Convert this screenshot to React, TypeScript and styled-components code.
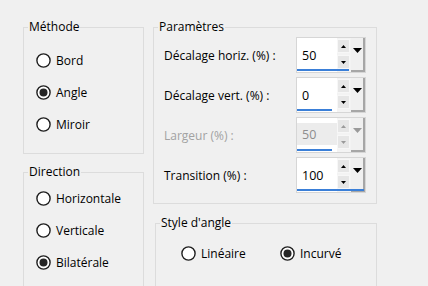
import styled, { createGlobalStyle } from 'styled-components';

const GlobalStyle = createGlobalStyle`
  html, body {
    margin: 0;
    padding: 0;
    background: #f0f0f0;
    overflow: hidden;
  }
  body {
    font-family: 'Open Sans', 'Noto Sans', sans-serif;
    font-size: 12px;
    color: #000;
  }
`;

const Page = styled.div`
  display: grid;
  grid-template-columns: 121px 224px;
  column-gap: 9px;
  padding: 18px 0 0 23px;
  height: 268px;
  overflow: hidden;
`;

const Column = styled.div<{ gap: number }>`
  display: flex;
  flex-direction: column;
  gap: ${({ gap }) => gap}px;
`;

const Group = styled.fieldset<{ shift?: number }>`
  margin: 0 0 0 ${({ shift }) => shift ?? 0}px;
  padding: 0;
  min-width: 0;
  border: 1px solid #dcdcdc;
  border-radius: 0;
`;

const Legend = styled.legend`
  margin-left: 4px;
  padding: 0 1px;
  line-height: 18px;
  font-size: 12px;
`;

const RadioList = styled.div<{ top: number; bottom: number }>`
  display: flex;
  flex-direction: column;
  padding: ${({ top, bottom }) => `${top}px 0 ${bottom}px 12px`};
`;

const RadioRow = styled.div<{ width?: number }>`
  display: flex;
  align-items: center;
  gap: 5px;
  height: 32px;
  width: ${({ width }) => (width ? `${width}px` : 'auto')};
  font-size: 12px;
`;

const InlineRadios = styled.div`
  display: flex;
  padding: 9px 0 30px 25px;

  ${RadioRow} {
    height: 24px;
  }
`;

const ParamList = styled.div`
  display: flex;
  flex-direction: column;
  gap: 4px;
  padding: 1px 10px 10px 10px;
`;

const ParamRow = styled.div<{ disabled?: boolean }>`
  display: flex;
  align-items: center;
  justify-content: space-between;
  height: 36px;
  color: ${({ disabled }) => (disabled ? '#a2a2a2' : '#000')};
`;

const SpinBox = styled.div`
  position: relative;
  display: flex;
  width: 70px;
  height: 36px;
  box-sizing: border-box;
  border: 1px solid #d6d6d6;
  background: #fff;
`;

const ValueField = styled.div<{ disabled?: boolean }>`
  flex: 1;
  display: flex;
  align-items: center;
  padding-left: 5px;
  margin: ${({ disabled }) => (disabled ? '5px 0 7px 0' : '0')};
  background: ${({ disabled }) => (disabled ? '#ececec' : '#fff')};
  color: ${({ disabled }) => (disabled ? '#8d8d8d' : '#000')};
  font-size: 12.5px;
`;

const StepColumn = styled.div`
  display: flex;
  flex-direction: column;
  gap: 2px;
  width: 13px;
  padding: 1px 1px 3px 0;
  background: #f3f3f3;
`;

const StepButton = styled.div`
  flex: 1;
  display: grid;
  place-items: center;
  background: #e6e6e6;
  border: 1px solid #f7f7f7;
`;

const DropButton = styled.div`
  width: 14px;
  display: flex;
  justify-content: center;
  padding-top: 10px;
  box-sizing: border-box;
  background: #f0f0f0;
  border-right: 2px solid #a6a6a6;
  border-bottom: 2px solid #a6a6a6;
`;

const Bar = styled.div`
  position: absolute;
  left: 0;
  bottom: 1px;
  height: 2px;
  background: #3a7fd8;
`;

function Radio({ checked }: { checked?: boolean }) {
  return (
    <svg width="15" height="15" viewBox="0 0 15 15">
      <circle cx="7.5" cy="7.5" r="6.6" fill="#fff" stroke="#1e1e1e" strokeWidth="1.4" />
      {checked && <circle cx="7.5" cy="7.5" r="4" fill="#262626" />}
    </svg>
  );
}

function Tri({ w, h, color, up }: { w: number; h: number; color: string; up?: boolean }) {
  return (
    <svg width={w} height={h} viewBox={`0 0 ${w} ${h}`}>
      <polygon points={up ? `0,${h} ${w},${h} ${w / 2},0` : `0,0 ${w},0 ${w / 2},${h}`} fill={color} />
    </svg>
  );
}

interface SpinProps {
  label: string;
  value: string;
  bar: number;
  disabled?: boolean;
}

function SpinParam({ label, value, bar, disabled }: SpinProps) {
  const arrow = disabled ? '#9a9a9a' : '#000';
  return (
    <ParamRow disabled={disabled}>
      <span>{label}</span>
      <SpinBox>
        <ValueField disabled={disabled}>{value}</ValueField>
        <StepColumn>
          <StepButton>
            <Tri w={5} h={3} color={arrow} up />
          </StepButton>
          <StepButton>
            <Tri w={5} h={3} color={arrow} />
          </StepButton>
        </StepColumn>
        <DropButton>
          <Tri w={9} h={5} color={arrow} />
        </DropButton>
        <Bar style={{ width: bar }} />
      </SpinBox>
    </ParamRow>
  );
}

function RadioItem({ label, checked, width }: { label: string; checked?: boolean; width?: number }) {
  return (
    <RadioRow width={width}>
      <Radio checked={checked} />
      <span>{label}</span>
    </RadioRow>
  );
}

export default function App() {
  return (
    <>
      <GlobalStyle />
      <Page>
        <Column gap={9}>
          <Group>
            <Legend>Méthode</Legend>
            <RadioList top={8} bottom={13}>
              <RadioItem label="Bord" />
              <RadioItem label="Angle" checked />
              <RadioItem label="Miroir" />
            </RadioList>
          </Group>
          <Group>
            <Legend>Direction</Legend>
            <RadioList top={1} bottom={30}>
              <RadioItem label="Horizontale" />
              <RadioItem label="Verticale" />
              <RadioItem label="Bilatérale" checked />
            </RadioList>
          </Group>
        </Column>
        <Column gap={10}>
          <Group>
            <Legend>Paramètres</Legend>
            <ParamList>
              <SpinParam label="Décalage horiz. (%) :" value="50" bar={52} />
              <SpinParam label="Décalage vert. (%) :" value="0" bar={35} />
              <SpinParam label="Largeur (%) :" value="50" bar={35} disabled />
              <SpinParam label="Transition (%) :" value="100" bar={67} />
            </ParamList>
          </Group>
          <Group shift={2}>
            <Legend>Style d'angle</Legend>
            <InlineRadios>
              <RadioItem label="Linéaire" width={99} />
              <RadioItem label="Incurvé" checked />
            </InlineRadios>
          </Group>
        </Column>
      </Page>
    </>
  );
}
